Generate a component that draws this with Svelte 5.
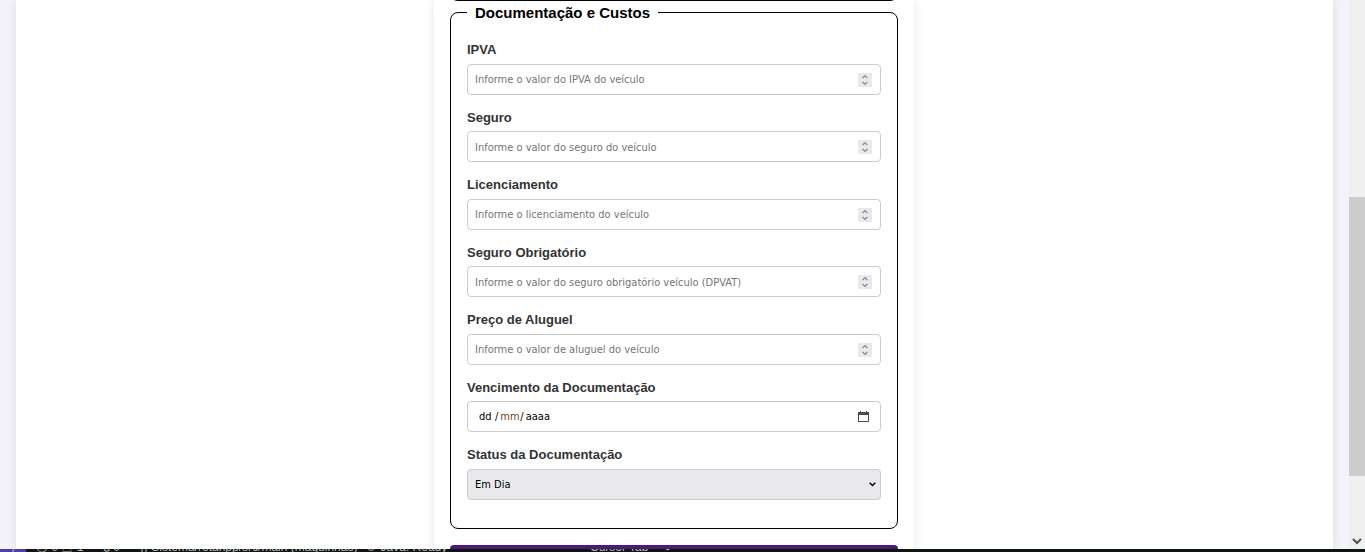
<script>
  const fields = [
    { id: 'ipva', label: 'IPVA', hint: 'Informe o valor do IPVA do veículo' },
    { id: 'seguro', label: 'Seguro', hint: 'Informe o valor do seguro do veículo' },
    { id: 'licenciamento', label: 'Licenciamento', hint: 'Informe o licenciamento do veículo' },
    { id: 'dpvat', label: 'Seguro Obrigatório', hint: 'Informe o valor do seguro obrigatório veículo (DPVAT)' },
    { id: 'aluguel', label: 'Preço de Aluguel', hint: 'Informe o valor de aluguel do veículo' }
  ];
</script>

<div class="screen">
  <div class="viewport">
    <main class="page">
      <form class="card">
        <div class="previous"></div>
        <fieldset>
          <legend>Documentação e Custos</legend>
          {#each fields as f}
            <div class="field">
              <label for={f.id}>{f.label}</label>
              <div class="control">
                <input id={f.id} type="number" placeholder={f.hint} />
                <svg class="spinner" viewBox="0 0 14 14" aria-hidden="true">
                  <rect width="14" height="14" fill="#e9e9ed" />
                  <path d="M4.5 5 7 2.7 9.5 5M4.5 9 7 11.3 9.5 9" fill="none" stroke="#8f8f9d" stroke-width="1.4" />
                </svg>
              </div>
            </div>
          {/each}
          <div class="field">
            <label for="dia">Vencimento da Documentação</label>
            <div class="control date">
              <input id="dia" class="part" placeholder="dd" />
              <span>/</span>
              <input class="part month" placeholder="mm" aria-label="Mês" />
              <span>/</span>
              <input class="part year" placeholder="aaaa" aria-label="Ano" />
              <button type="button" class="calendar" aria-label="Abrir calendário">
                <svg viewBox="0 0 11 11">
                  <path d="M0 1h2V0h1v1h5V0h1v1h2v10H0ZM1 4v6h9V4Z" fill="#4a4a4f" fill-rule="evenodd" />
                </svg>
              </button>
            </div>
          </div>
          <div class="field">
            <label for="status">Status da Documentação</label>
            <div class="control">
              <select id="status"><option>Em Dia</option></select>
              <svg class="arrow" viewBox="0 0 7 5" aria-hidden="true">
                <path d="M.7.8 3.5 3.6 6.3.8" fill="none" stroke="#000" stroke-width="1.4" />
              </svg>
            </div>
          </div>
        </fieldset>
        <button type="submit" class="submit" aria-label="Cadastrar"></button>
      </form>
    </main>
    <div class="scrollbar">
      <div class="thumb"></div>
      <svg viewBox="0 0 10 7" aria-hidden="true">
        <path d="M1 1 5 5 9 1" fill="none" stroke="#505050" stroke-width="2" />
      </svg>
    </div>
  </div>
  <footer>
    <span class="remote">⟩</span>
    <span class="problems">ⓧ 0 △ 1</span>
    <span class="ports">⍙ 0</span>
    <span class="project">{'{}'} Sistema/rotaripp/src/main (maquinnas)</span>
    <span class="java">☺ Java: Ready</span>
    <span class="cursor">Cursor Tab</span>
    <span class="bell">◒</span>
  </footer>
</div>

<style>
  :global(body) {
    overflow: hidden;
  }
  .screen {
    display: flex;
    flex-direction: column;
    height: 100vh;
    font-family: "Liberation Sans", Arial, sans-serif;
  }
  .viewport {
    flex: 1;
    min-height: 0;
    display: flex;
    overflow: hidden;
    background: #f4f3fa;
  }
  .page {
    flex: 1;
    margin: 0 16px;
    padding-right: 1px;
    display: flex;
    justify-content: center;
    align-items: flex-start;
    background: #fff;
    box-shadow: 0 0 10px rgba(0, 0, 0, 0.1);
  }
  .card {
    box-sizing: border-box;
    width: 100%;
    max-width: 480px;
    padding: 0 16px 16px;
    background: #fff;
    box-shadow: 0 0 10px rgba(0, 0, 0, 0.1);
  }
  .previous {
    height: 8px;
    margin-top: -8px;
    border: 1px solid #000;
    border-top: 0;
    border-radius: 0 0 8px 8px;
    box-sizing: content-box;
  }
  fieldset {
    margin: 2px 0 16px;
    padding: 18px 16px 16px;
    min-width: 0;
    border: 1px solid #000;
    border-radius: 8px;
  }
  legend {
    padding: 0 8px;
    font-size: 15px;
    line-height: 19px;
    font-weight: bold;
    color: #000;
  }
  .field {
    margin-bottom: 13px;
  }
  .field:last-child {
    margin-bottom: 12px;
  }
  label {
    display: block;
    margin-bottom: 4px;
    font-size: 13px;
    line-height: 1.5;
    font-weight: bold;
    color: #333;
  }
  .control {
    position: relative;
    height: 31px;
  }
  .control > input:not(.part),
  select {
    display: block;
    box-sizing: border-box;
    width: 100%;
    height: 31px;
    margin: 0;
    padding: 1px 7px 0;
    border: 1px solid #ccc;
    border-radius: 4px;
    background: #fff;
    font-family: "DejaVu Sans Condensed", "DejaVu Sans", sans-serif;
    font-size: 11px;
    color: #000;
    appearance: none;
  }
  input::-webkit-inner-spin-button {
    appearance: none;
  }
  input::placeholder {
    color: #757575;
    opacity: 1;
  }
  select {
    background: #e9e9ed;
  }
  .spinner {
    position: absolute;
    top: 9px;
    right: 9px;
    width: 14px;
    height: 14px;
  }
  .arrow {
    position: absolute;
    top: 13px;
    right: 5px;
    width: 7px;
    height: 5px;
  }
  .date {
    display: flex;
    align-items: center;
    gap: 2px;
    box-sizing: border-box;
    padding: 0 11px;
    border: 1px solid #ccc;
    border-radius: 4px;
    font-family: "DejaVu Sans Condensed", "DejaVu Sans", sans-serif;
    font-size: 11px;
  }
  .part {
    width: 14px;
    padding: 0;
    border: 0;
    background: none;
    font: inherit;
  }
  .date .part::placeholder {
    color: #000;
  }
  .date .month {
    width: 20px;
    margin-right: -2px;
  }
  .date .month::placeholder {
    color: #7a3f0c;
  }
  .year {
    width: 28px;
  }
  .calendar {
    display: flex;
    margin-left: auto;
    padding: 0;
    border: 0;
    background: none;
  }
  .calendar svg {
    width: 11px;
    height: 11px;
  }
  .submit {
    display: block;
    width: 100%;
    height: 40px;
    border: 0;
    border-radius: 4px;
    background: #4b1a76;
  }
  .scrollbar {
    display: flex;
    flex-direction: column;
    align-items: center;
    justify-content: space-between;
    box-sizing: border-box;
    width: 16px;
    padding: 197px 0 4px;
    background: #f0f0f0;
  }
  .thumb {
    width: 100%;
    height: 279px;
    background: #cdcdcd;
  }
  .scrollbar svg {
    width: 10px;
    height: 7px;
  }
  footer {
    display: flex;
    align-items: flex-end;
    height: 3px;
    overflow: hidden;
    background: #101514;
    font-size: 12px;
    line-height: 10px;
    color: #b8bdbb;
    white-space: pre;
  }
  .remote {
    width: 26px;
    background: #4b3fb5;
    text-align: center;
  }
  .problems {
    margin-left: 10px;
    width: 67px;
  }
  .ports {
    width: 37px;
  }
  .project {
    width: 225px;
  }
  .java {
    width: 225px;
  }
  .cursor {
    width: 74px;
  }
</style>
